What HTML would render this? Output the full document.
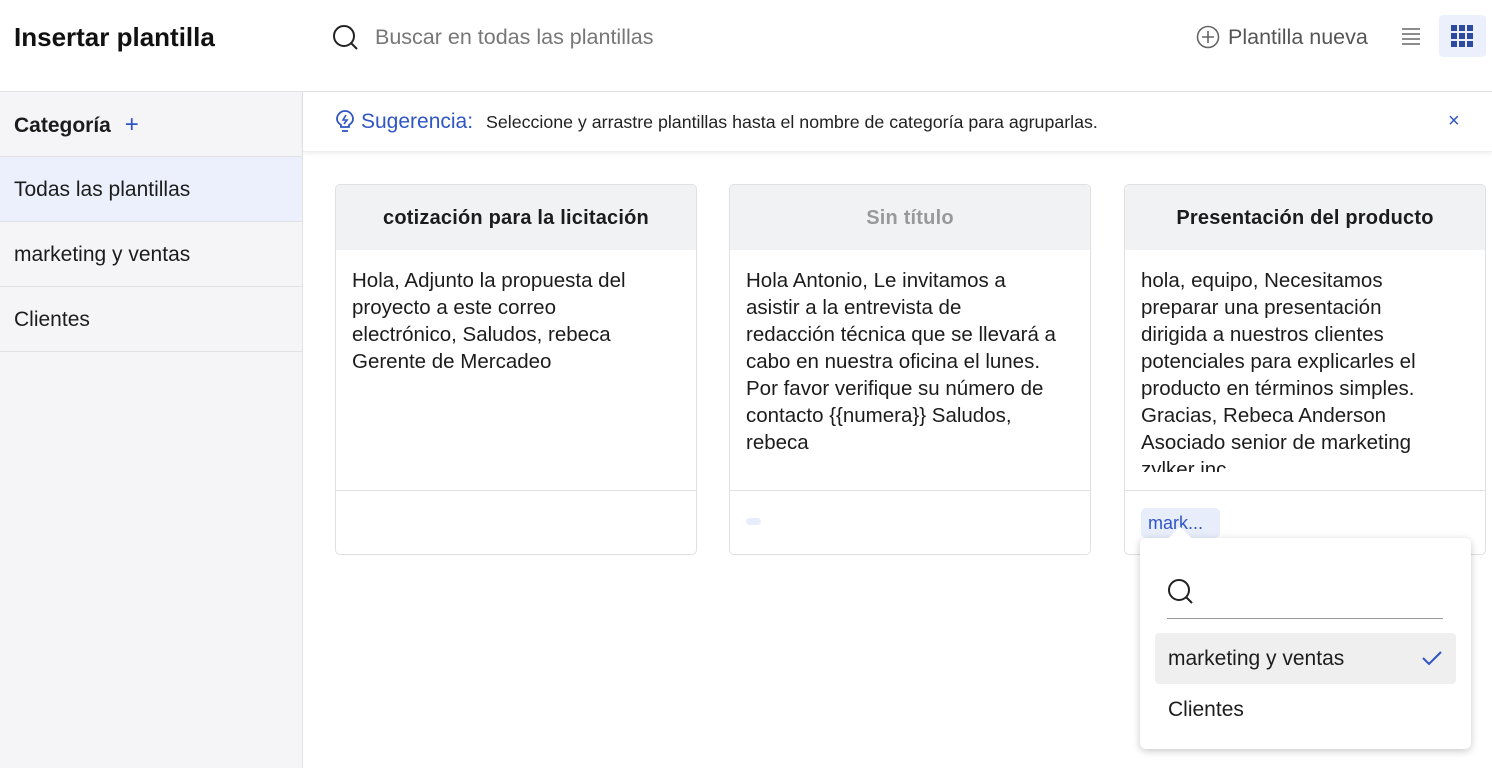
<!DOCTYPE html>
<html><head><meta charset="utf-8"><style>
*{box-sizing:border-box;margin:0;padding:0}
body{width:1492px;height:768px;overflow:hidden;font-family:"Liberation Sans",sans-serif;background:#fff;color:#1c1c1c;position:relative}
.abs{position:absolute}
.hdr{left:0;top:0;width:1492px;height:92px;border-bottom:1px solid #e2e2e4}
.side{left:0;top:92px;width:303px;height:676px;background:#f5f5f7;border-right:1px solid #e2e2e4}
.si{height:65px;border-bottom:1px solid #e2e2e4;padding-left:14px;font-size:21px;line-height:66px}
.tip{left:303px;top:92px;width:1189px;height:60px;background:#fff;box-shadow:0 2px 4px rgba(0,0,0,.06);border-bottom:1px solid #eee}
.card{width:362px;height:371px;border:1px solid #dfe0e3;border-radius:5px;top:184px;overflow:hidden;background:#fff}
.ch{height:65px;background:#f1f2f4;text-align:center;font-weight:bold;font-size:20px;line-height:66px;letter-spacing:.2px}
.cb{height:241px;padding:17px 16px 0;font-size:20.5px;line-height:27px;overflow:hidden;border-bottom:1px solid #e2e2e4;white-space:nowrap}
</style></head><body>
<div class="abs hdr">
 <div class="abs" style="left:14px;top:22px;font-size:26px;font-weight:bold;color:#111">Insertar plantilla</div>
 <svg class="abs" style="left:332px;top:24px" width="28" height="28" viewBox="0 0 28 28"><circle cx="12" cy="12" r="10" fill="none" stroke="#222" stroke-width="2"/><path d="M19 19l6 6" stroke="#222" stroke-width="2"/></svg>
 <div class="abs" style="left:375px;top:25px;font-size:21.5px;color:#777">Buscar en todas las plantillas</div>
 <svg class="abs" style="left:1196px;top:25px" width="24" height="24" viewBox="0 0 24 24"><circle cx="12" cy="12" r="10.5" fill="none" stroke="#666" stroke-width="1.6"/><path d="M12 6v12M6 12h12" stroke="#666" stroke-width="1.6"/></svg>
 <div class="abs" style="left:1228px;top:25px;font-size:21.5px;color:#555">Plantilla nueva</div>
 <svg class="abs" style="left:1401px;top:27px" width="20" height="18"><path d="M1 2h18M1 7h18M1 12h18M1 17h18" stroke="#666" stroke-width="1.6"/></svg>
 <div class="abs" style="left:1439px;top:15px;width:47px;height:42px;background:#ebf0fc;border-radius:4px"></div>
 <svg class="abs" style="left:1451px;top:25px" width="23" height="23"><g fill="#2b4aa0"><rect x="0" y="0" width="6" height="6"/><rect x="8" y="0" width="6" height="6"/><rect x="16" y="0" width="6" height="6"/><rect x="0" y="8" width="6" height="6"/><rect x="8" y="8" width="6" height="6"/><rect x="16" y="8" width="6" height="6"/><rect x="0" y="16" width="6" height="6"/><rect x="8" y="16" width="6" height="6"/><rect x="16" y="16" width="6" height="6"/></g></svg>
</div>
<div class="abs side">
 <div class="si" style="font-weight:bold">Categoría <span style="color:#2f56c4;font-weight:normal;font-size:24px;margin-left:8px">+</span></div>
 <div class="si" style="background:#ebf0fc">Todas las plantillas</div>
 <div class="si">marketing y ventas</div>
 <div class="si">Clientes</div>
</div>
<div class="abs tip">
 <svg class="abs" style="left:32px;top:18px" width="20" height="24" viewBox="0 0 20 24"><path d="M6 17v-2C3 13 2 11 2 9a8 8 0 0116 0c0 2-1 4-4 6v2z" fill="none" stroke="#2f56c4" stroke-width="1.8"/><path d="M7 21h6" stroke="#2f56c4" stroke-width="1.8"/><path d="M11 5l-3 5h4l-3 4" fill="none" stroke="#2f56c4" stroke-width="1.6"/></svg>
 <div class="abs" style="left:58px;top:18px;font-size:21px;color:#2f56c4">Sugerencia:</div>
 <div class="abs" style="left:183px;top:20px;font-size:17.8px;color:#222">Seleccione y arrastre plantillas hasta el nombre de categoría para agruparlas.</div>
 <div class="abs" style="left:1145px;top:18px;font-size:20px;color:#2f56c4">×</div>
</div>
<div class="abs card" style="left:335px"><div class="ch">cotización para la licitación</div><div class="cb">Hola, Adjunto la propuesta del<br>proyecto a este correo<br>electrónico, Saludos, rebeca<br>Gerente de Mercadeo</div></div>
<div class="abs card" style="left:729px"><div class="ch" style="color:#999">Sin título</div><div class="cb">Hola Antonio, Le invitamos a<br>asistir a la entrevista de<br>redacción técnica que se llevará a<br>cabo en nuestra oficina el lunes.<br>Por favor verifique su número de<br>contacto {{numera}} Saludos,<br>rebeca</div><div class="abs" style="left:16px;top:333px;width:15px;height:7px;background:#e8edfb;border-radius:4px"></div></div>
<div class="abs card" style="left:1124px"><div class="ch">Presentación del producto</div><div class="cb"><div style="height:205px;overflow:hidden">hola, equipo, Necesitamos<br>preparar una presentación<br>dirigida a nuestros clientes<br>potenciales para explicarles el<br>producto en términos simples.<br>Gracias, Rebeca Anderson<br>Asociado senior de marketing<br>zylker inc</div></div>
 <div class="abs" style="left:16px;top:323px;width:79px;height:30px;background:#e8edfb;border-radius:5px;color:#2f56c4;font-size:18px;line-height:30px;padding-left:7px">mark...</div></div>
<div class="abs" style="left:1140px;top:538px;width:331px;height:211px;background:#fff;border-radius:6px;box-shadow:0 2px 8px rgba(0,0,0,.22)">
 <div class="abs" style="left:32px;top:-8px;width:16px;height:16px;background:#fff;transform:rotate(45deg)"></div>
 <svg class="abs" style="left:27px;top:40px" width="28" height="28" viewBox="0 0 28 28"><circle cx="12" cy="12" r="10" fill="none" stroke="#222" stroke-width="2"/><path d="M19 19l6 6" stroke="#222" stroke-width="2"/></svg>
 <div class="abs" style="left:27px;top:80px;width:276px;height:1px;background:#999"></div>
 <div class="abs" style="left:15px;top:95px;width:301px;height:51px;background:#efefef;border-radius:4px"></div>
 <div class="abs" style="left:28px;top:109px;font-size:21px">marketing y ventas</div>
 <svg class="abs" style="left:282px;top:112px" width="20" height="16"><path d="M1 8l6 6L19 2" fill="none" stroke="#2f56c4" stroke-width="2"/></svg>
 <div class="abs" style="left:28px;top:160px;font-size:21px">Clientes</div>
</div>
</body></html>
